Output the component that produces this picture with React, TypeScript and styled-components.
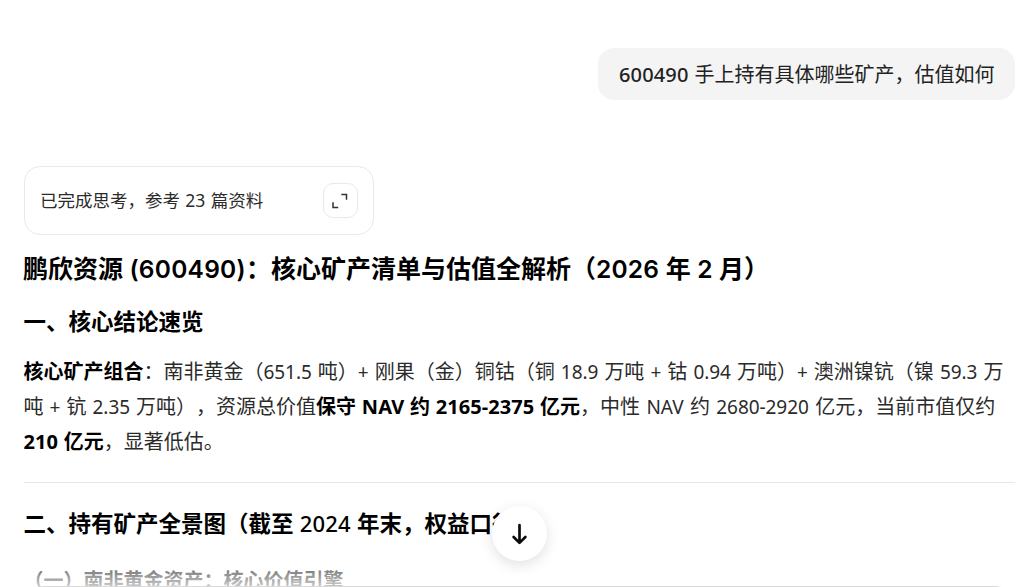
import styled, { createGlobalStyle } from "styled-components";

const splitLatin = (text: string) => text.split(/([\x20-\x7e]+)/).filter(Boolean);

const isLatin = (part: string) => /^[\x20-\x7e]+$/.test(part);

interface RunProps {
    $size: number;
    $spacing?: number;
    $word?: number;
    $weight?: number;
    $font?: string;
}

interface MixedProps extends RunProps {
    text: string;
}

// digits and latin letters are set slightly apart from the chinese glyphs
function Mixed({ text, ...run }: MixedProps) {
    return (
        <>
            {splitLatin(text).map((part, i) =>
                isLatin(part) ? <Latin key={i} {...run}>{part}</Latin> : part
            )}
        </>
    );
}

const body = { $size: 19, $spacing: -0.06, $word: 1.2 };
const strong = { $size: 20, $spacing: 0.06, $word: 0.5, $weight: 700 };
const title = { $size: 24.5, $spacing: 0.25, $word: 0, $weight: 600, $font: "Inter" };
const section = { $size: 22, $spacing: 0.1, $weight: 500, $word: 0.5 };

const watermarks = [
    { x: 18, y: 130 },
    { x: 646, y: 130 },
    { x: 40, y: 737 },
    { x: 665, y: 737 },
];

export default function App() {
    return (
        <Page>
            <GlobalStyle />
            <Question>
                <Mixed text="600490 手上持有具体哪些矿产，估值如何" $size={20} $spacing={0.15} $weight={500} $word={0.6} />
            </Question>
            <ThinkCard>
                <span>
                    <Mixed text="已完成思考，参考 23 篇资料" $size={17.5} $word={0.8} />
                </span>
                <ExpandBtn aria-label="展开">
                    <svg width="18" height="18" viewBox="0 0 18 18" fill="none" stroke="#333" strokeWidth="1.5">
                        <path d="M9.3 2.5H14.5V7.7M1 10.3V15.5H6.2" />
                    </svg>
                </ExpandBtn>
            </ThinkCard>
            <Title>
                <Mixed text="鹏欣资源 (600490)：核心矿产清单与估值全解析（2026 年 2 月）" {...title} />
            </Title>
            <Section>一、核心结论速览</Section>
            <Paragraph>
                <Line>
                    <b>核心矿产组合</b>
                    <Mixed text="：南非黄金（651.5 吨）+ 刚果（金）铜钴（铜 18.9 万吨 + 钴 0.94 万吨）" {...body} />
                    <Mixed text="+ 澳洲镍钪（镍 59.3 万" {...body} />
                </Line>
                <Line>
                    <Mixed text="吨 + 钪 2.35 万吨），资源总价值" {...body} />
                    <b><Mixed text="保守 NAV 约 2165-2375 亿元" {...strong} /></b>
                    <Mixed text="，中性 NAV 约 2680-2920 亿元，当前市值仅约" {...body} $word={1.5} />
                </Line>
                <Line>
                    <b><Mixed text="210 亿元" {...strong} /></b>，显著低估。
                </Line>
            </Paragraph>
            <Divider />
            <Section>
                <Mixed text="二、持有矿产全景图（截至 2024 年末，权益口径）" {...section} />
            </Section>
            <SubSection>（一）南非黄金资产：核心价值引擎</SubSection>
            <Fade />
            <InputBox />
            {watermarks.map(({ x, y }) => (
                <Watermark key={`${x}-${y}`} $x={x} $y={y}>
                    <div>福建省金龙稀土股份有限公司 2026/02/09</div>
                    <div>JL08457 JL08457</div>
                </Watermark>
            ))}
            <ScrollBtn aria-label="回到底部">
                <svg width="20" height="24" viewBox="0 0 20 24" fill="none" stroke="#0b0b0b" strokeWidth="2.7" strokeLinecap="round" strokeLinejoin="round">
                    <path d="M9.5 3.2V20.5M3.6 15L9.5 20.9L15.4 15" />
                </svg>
            </ScrollBtn>
        </Page>
    );
}

const GlobalStyle = createGlobalStyle`
    * {
        box-sizing: border-box;
    }
    body {
        margin: 0;
        background: #fff;
        overflow: hidden;
    }
`

const Page = styled.main`
    position: relative;
    display: flex;
    flex-direction: column;
    height: 587px;
    padding: 48px 3px 0 24px;
    overflow: hidden;
    background: #fff;
    color: #2b2b2b;
    font-family: "Noto Sans CJK SC", sans-serif;
    font-size: 20px;
    white-space: nowrap;
    text-spacing-trim: space-all;
    text-autospace: no-autospace;

    > * {
        flex-shrink: 0;
    }
`

const Latin = styled.span<RunProps>`
    font-family: "${({ $font }) => $font ?? "Noto Sans"}", "Noto Sans CJK SC", sans-serif;
    font-size: ${({ $size }) => $size}px;
    font-weight: ${({ $weight }) => $weight ?? 400};
    letter-spacing: ${({ $spacing }) => $spacing ?? 0}px;
    word-spacing: ${({ $word }) => $word ?? 0}px;
    line-height: 1;
    white-space: pre;
`

const Question = styled.div`
    align-self: flex-end;
    width: 417px;
    height: 52px;
    padding-left: 21px;
    border-radius: 16px;
    background: #f4f4f4;
    color: #222;
    line-height: 51px;
`

const ThinkCard = styled.div`
    display: flex;
    align-items: center;
    justify-content: space-between;
    width: 350px;
    height: 69px;
    margin-top: 66px;
    padding: 0 15px;
    border: 1px solid #e9e9e9;
    border-radius: 16px;
    font-size: 17.5px;

    > span {
        padding-bottom: 2px;
    }
`

const ExpandBtn = styled.button`
    display: flex;
    align-items: center;
    justify-content: center;
    width: 35px;
    height: 35px;
    padding: 0;
    border: 1px solid #e9e9e9;
    border-radius: 10px;
    background: #fff;
`

const Title = styled.h1`
    height: 36px;
    margin: 14px 0 0 -1px;
    color: #000;
    font-size: 25px;
    font-weight: 700;
    line-height: 36px;
`

const Section = styled.h2`
    height: 32px;
    margin: 19px 0 0 -0.5px;
    color: #000;
    font-size: 22.5px;
    font-weight: 700;
    line-height: 32px;
`

const Paragraph = styled.div`
    margin: 17px 0 0 -0.5px;

    b {
        color: #000;
        font-weight: 700;
    }
`

const Line = styled.div`
    height: 35px;
    line-height: 36px;
`

const Divider = styled.div`
    height: 1px;
    margin: 24px 0 4px;
    background: #e8e8e8;
`

const SubSection = styled.h3`
    height: 28px;
    margin: 28px 0 0 -0.5px;
    color: #000;
    font-size: 20px;
    font-weight: 700;
    line-height: 28px;
`

const Fade = styled.div`
    position: absolute;
    right: 0;
    bottom: 0;
    left: 0;
    height: 22px;
    background: linear-gradient(rgba(255, 255, 255, 0.4), rgba(255, 255, 255, 0.8));
`

const InputBox = styled.div`
    position: absolute;
    right: 3px;
    bottom: -59px;
    left: 24px;
    height: 60px;
    border: 1px solid #d9d9d9;
    border-radius: 20px;
    background: #fff;
`

const ScrollBtn = styled.button`
    position: absolute;
    top: 506px;
    left: 492px;
    display: flex;
    align-items: center;
    justify-content: center;
    width: 55px;
    height: 55px;
    padding: 0;
    border: none;
    border-radius: 50%;
    background: #fff;
    box-shadow: 0 4px 14px rgba(0, 0, 0, 0.12);
`

const Watermark = styled.div<{ $x: number; $y: number }>`
    position: absolute;
    top: ${({ $y }) => $y}px;
    left: ${({ $x }) => $x}px;
    color: rgba(0, 0, 0, 0.015);
    font-size: 23px;
    letter-spacing: 2px;
    line-height: 32px;
    pointer-events: none;
    transform: rotate(-45deg);
    transform-origin: 0 0;
`
